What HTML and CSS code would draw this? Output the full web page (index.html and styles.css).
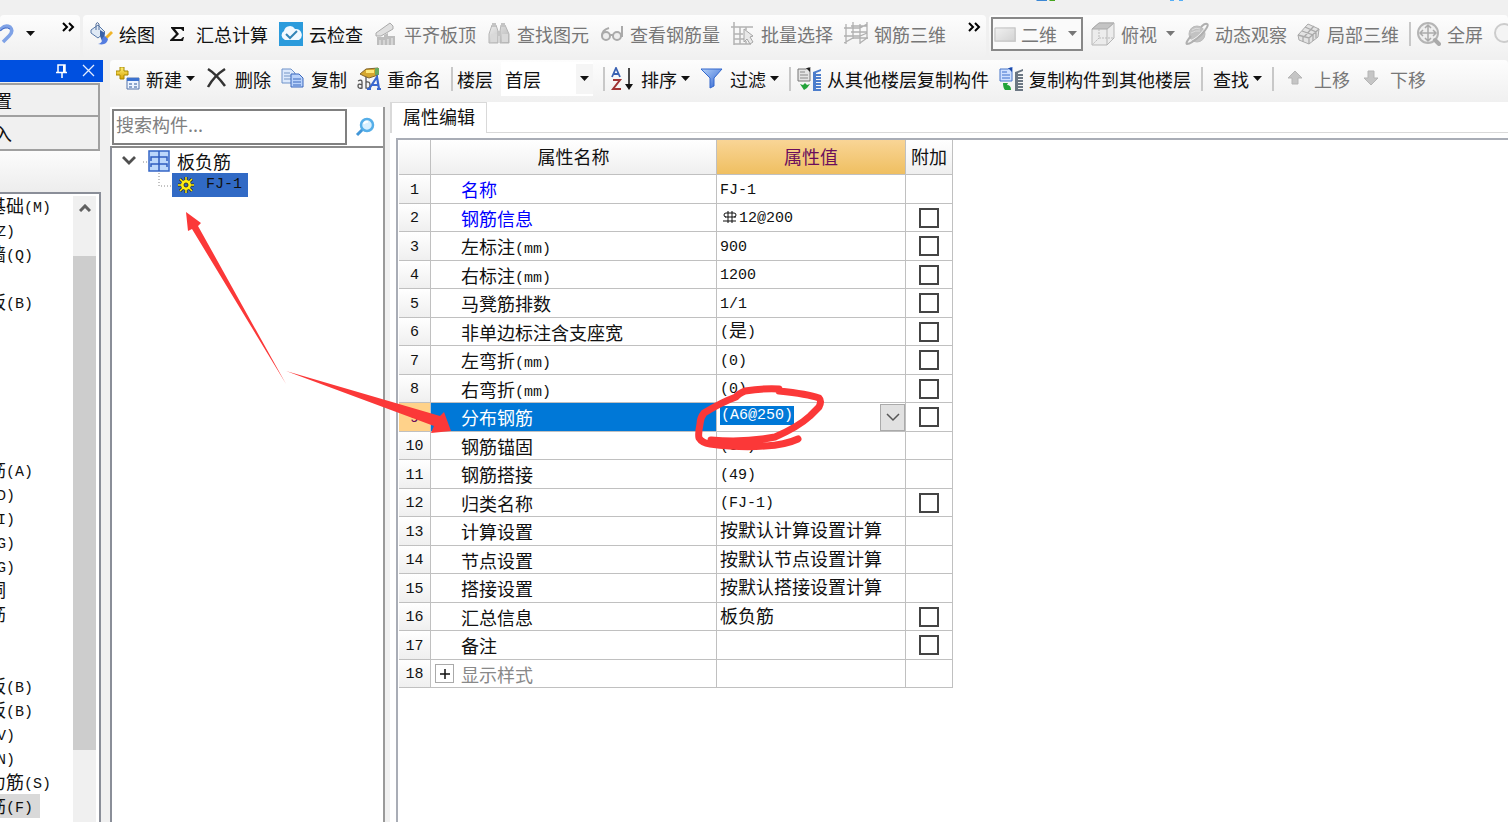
FILE: index.html
```html
<!DOCTYPE html>
<html lang="zh-CN">
<head>
<meta charset="utf-8">
<title>属性编辑</title>
<link rel="stylesheet" href="styles.css">
</head>
<body>
<svg class="defs" width="0" height="0" aria-hidden="true">
  <defs>
    <linearGradient id="blue" x1="0" y1="0" x2="1" y2="1"><stop offset="0" stop-color="#b5d3fa"/><stop offset="1" stop-color="#2c60cf"/></linearGradient>
    <linearGradient id="gold" x1="0" y1="0" x2="0" y2="1"><stop offset="0" stop-color="#fff27a"/><stop offset="1" stop-color="#d8a200"/></linearGradient>
    <linearGradient id="grey" x1="0" y1="0" x2="1" y2="1"><stop offset="0" stop-color="#eee"/><stop offset="1" stop-color="#b5b5b5"/></linearGradient>
    <symbol id="down" viewBox="0 0 9 6"><path d="M0 0h9L4.500 5z" fill="currentColor"/></symbol>
    <symbol id="more" viewBox="0 0 14 10"><path d="M1 1l4 4-4 4M7 1l4 4-4 4" fill="none" stroke="#000" stroke-width="2"/></symbol>
  </defs>
</svg>

<div class="strip">
  <svg class="strip-icons" viewBox="0 0 160 3" aria-hidden="true"><path d="M0 0h11v1H1z" fill="#3c87d4"/><path d="M13 0h6v1h-5z" fill="#46a51e"/><path d="M134 0h4v1h-4zM143 0h4v1h-4z" fill="#55aef5"/></svg>
</div>

<header class="bars">
  <div class="bar bar-undo">
    <button class="tool" aria-label="撤销"><svg class="undo" viewBox="0 0 14 24"><path d="M0 8Q5 2 10 5Q14 9 9 14L3 20" fill="none" stroke="#7fa2e6" stroke-width="3.500"/><path d="M0 9Q5 4 10 7" fill="none" stroke="#3c66c5"/></svg></button>
    <button class="tool" aria-label="撤销列表"><svg class="arrow"><use href="#down"/></svg></button>
    <button class="tool more" aria-label="更多"><svg class="chev"><use href="#more"/></svg></button>
  </div>
  <div class="bar bar-draw">
    <button class="tool"><svg class="icon" viewBox="0 0 24 24"><path d="M2 8L9 3l7 7-7 6-7-5z" fill="#dfe9f5" stroke="#5878a8"/><path d="M7 8V2q1-3 3 0v6" fill="none" stroke="#536f9b"/><path d="M11 8l5 3-1 7 2 2-4-1-2-5z" fill="#3a62a8"/><path d="M22 9l2 2-6 6-2-2z" fill="#f0b429"/><path d="M16 14l3 3q-1 7-10 5 4-1 4-4 0-3 3-4z" fill="#547de0"/></svg>绘图</button>
    <button class="tool"><svg class="icon" viewBox="0 0 24 24"><path d="M5 5h13v4h-1l-2-2H9l4 5-5 5h7l2-2h1l-1 4H4v-1l6-6-5-6z" fill="#111"/></svg>汇总计算</button>
    <button class="tool"><svg class="icon" viewBox="0 0 24 24"><path d="M0 0h24v24H0z" fill="#2b9bdc"/><path d="M6 18a5 5 0 0 1-1-9 6 6 0 0 1 11-2 6 6 0 0 1 4 11z" fill="#f1f9ff"/><path d="M7 12l4 4 7-7" fill="none" stroke="#3385b7" stroke-width="2"/></svg>云检查</button>
    <button class="tool off"><svg class="icon" viewBox="0 0 24 24"><path d="M2 11L16 1l3 3v3L7 14H2z" fill="#e0e0e0" stroke="#aaa"/><path d="M3 15h7v-2l4-2v3h7v9H3z" fill="#bdbdbd"/><path d="M6 18v5M10 18v5M14 17v6M18 16v7" stroke="#eee"/></svg>平齐板顶</button>
    <button class="tool off"><svg class="icon" viewBox="0 0 24 24"><path d="M5 3h4l2 6v12H2v-9zM14 3h4l4 9v9h-9V9z" fill="url(#grey)" stroke="#b5b5b5"/><path d="M5 1h4v4H5zM14 1h4v4h-4zM10 9h4v5h-4z" fill="#c4c4c4"/><path d="M4 12h6v8H4zM15 12h6v8h-6z" fill="#d9d9d9"/></svg>查找图元</button>
    <button class="tool off"><svg class="icon" viewBox="0 0 24 24"><path d="M9 6Q2 8 2 14M22 4v11" fill="none" stroke="#aaa" stroke-width="2"/><circle cx="6" cy="14" r="4" fill="#eee" stroke="#aaa" stroke-width="2"/><circle cx="17" cy="14" r="4" fill="#eee" stroke="#aaa" stroke-width="2"/><path d="M10 13h3" stroke="#aaa" stroke-width="2"/></svg>查看钢筋量</button>
    <button class="tool off"><svg class="icon" viewBox="0 0 24 24"><path d="M3 0v23M0 5h22M3 12h9M3 17h10M3 22h17M9 5v17M15 5v3M15 19v3" fill="none" stroke="#b3b3b3" stroke-width="1.500"/><path d="M13 7l9 7-3 1 3 5-3 2-3-5-3 3z" fill="#e8e8e8" stroke="#a5a5a5"/></svg>批量选择</button>
    <button class="tool off"><svg class="icon" viewBox="0 0 24 24"><path d="M2 2v20M9 0v17M16 2v20M23 0v17M0 6h16l7-4M7 4h16M0 14h16l7-3M7 10h16M0 21l9-5h15M16 21l7-5" fill="none" stroke="#b0b0b0" stroke-width="1.300"/></svg>钢筋三维</button>
    <button class="tool more" aria-label="更多"><svg class="chev"><use href="#more"/></svg></button>
  </div>
  <div class="bar bar-view">
    <label class="combo combo-view">
      <svg class="icon" viewBox="0 0 24 24"><path d="M1 5h22v15H1z" fill="url(#grey)" opacity=".6"/><path d="M2 6h20v13H2z" fill="none" stroke="#c4c4c4"/></svg>
      <select aria-label="视图"><option>二维</option></select>
      <svg class="arrow"><use href="#down"/></svg>
    </label>
    <button class="tool off"><svg class="icon" viewBox="0 0 24 24"><path d="M1 7l7-6h15v15l-7 7H1z" fill="#ececec" stroke="#b5b5b5"/><path d="M1 7l7-6h15l-7 6z" fill="#c4c4c4" stroke="#aaa"/><path d="M16 7v16M23 1l-7 6" stroke="#b5b5b5"/><path d="M8 7v9h14M8 16l-6 6" fill="none" stroke="#bbb" stroke-dasharray="2 1"/></svg>俯视<svg class="arrow"><use href="#down"/></svg></button>
    <button class="tool off"><svg class="icon" viewBox="0 0 24 24"><circle cx="12" cy="12" r="8" fill="#c2c2c2" stroke="#bbb"/><path d="M7 8q4-3 8-1M6 11q5-3 9-2" fill="none" stroke="#ddd"/><path d="M6 14Q0 21 2 22Q6 22 16 13Q25 3 22 2Q20 1 16 5" fill="none" stroke="#b0b0b0" stroke-width="2"/><path d="M4 19Q12 17 20 6" stroke="#eee" fill="none"/></svg>动态观察</button>
    <button class="tool off"><svg class="icon" viewBox="0 0 24 24"><path d="M1 13L11 2l11 5-1 8-9 7-10-4z" fill="#e3e3e3" stroke="#aaa"/><path d="M1 13l11 3 10-9M12 16v6M8 5l11 5v6M5 9l11 4v6M6 14v6M17 4l-10 11" fill="none" stroke="#aaa" stroke-width="1.300"/></svg>局部三维</button>
    <div class="lead"><span class="sep"></span>
    <button class="tool off"><svg class="icon" viewBox="0 0 24 24"><circle cx="11" cy="11" r="10" fill="#eee" stroke="#b5b5b5" stroke-width="2"/><path d="M18 18l4 4" stroke="#aaa" stroke-width="4" stroke-linecap="round"/><path d="M11 4v14M4 11h14M8 6l3-3 3 3M8 16l3 3 3-3M6 8l-3 3 3 3M16 8l3 3-3 3" fill="none" stroke="#aaa" stroke-width="1.500"/></svg>全屏</button></div>
    <button class="tool off" aria-label="缩放"><svg class="icon" viewBox="0 0 24 24"><circle cx="11" cy="11" r="9" fill="#f4f4f4" stroke="#ccc" stroke-width="2"/></svg></button>
  </div>
</header>

<div class="work">
  <aside class="side">
    <div class="side-title">
      <button class="title-btn" aria-label="固定"><svg viewBox="0 0 14 14"><path d="M3 8V1h7v7M1 8.500h11M7 9v5" fill="none" stroke="#fff" stroke-width="1.500"/><path d="M8 1h2v7H8z" fill="#fff"/></svg></button>
      <button class="title-btn" aria-label="关闭"><svg viewBox="0 0 14 14"><path d="M1 1l11 11M12 1L1 12" stroke="#e4edff" stroke-width="1.300"/></svg></button>
    </div>
    <button class="side-btn">置</button>
    <button class="side-btn">入</button>
    <div class="side-gap"></div>
    <div class="side-list">
      <ul class="kinds">
        <li>基础<span class="en">(M)</span></li><li><span class="en">(Z)</span></li><li>墙<span class="en">(Q)</span></li><li></li><li>板<span class="en">(B)</span></li>
        <li></li><li></li><li></li><li></li><li></li><li></li>
        <li>筋<span class="en">(A)</span></li><li><span class="en">(D)</span></li><li><span class="en">(I)</span></li><li><span class="en">(G)</span></li><li><span class="en">(G)</span></li><li>洞</li><li>筋</li>
        <li></li><li></li>
        <li>板<span class="en">(B)</span></li><li>板<span class="en">(B)</span></li><li><span class="en">(V)</span></li><li><span class="en">(N)</span></li><li>力筋<span class="en">(S)</span></li><li class="current">筋<span class="en">(F)</span></li>
      </ul>
      <div class="scroll"><svg class="up" viewBox="0 0 12 8"><path d="M1 7l5-5 5 5" fill="none" stroke="#606060" stroke-width="3"/></svg><div class="thumb"></div></div>
    </div>
  </aside>

  <main class="main">
    <div class="bar bar-edit">
      <button class="tool"><svg class="icon" viewBox="0 0 24 24"><path d="M4 0h4v4h4v4H8v4H4V8H0V4h4z" fill="url(#gold)" stroke="#a98700"/><path d="M11 11h12v11H11z" fill="#edf4ff" stroke="#5574aa"/><path d="M11 11h12v3H11z" fill="#3c72cf"/><path d="M13 17h3M18 17h3M13 20h3M18 20h3" stroke="#8da6cc" stroke-width="2"/></svg>新建<svg class="arrow"><use href="#down"/></svg></button>
      <button class="tool"><svg class="icon" viewBox="0 0 24 24"><path d="M3 2q8 5 17 17M20 2Q9 9 3 20" fill="none" stroke="#333" stroke-width="2.500"/></svg>删除</button>
      <button class="tool"><svg class="icon" viewBox="0 0 24 24"><path d="M1 2h9l4 4v10H1z" fill="#dce9fc" stroke="#6f92c9"/><path d="M3 6h6M3 9h8M3 12h8" stroke="#7595c5"/><path d="M10 7h8l4 4v9H10z" fill="#b9d2fb" stroke="#3866bd"/><path d="M12 12h8M12 15h8M12 18h8" stroke="#3b69bd"/></svg>复制</button>
      <button class="tool"><svg class="icon" viewBox="0 0 24 24"><path d="M3 7l6-5 12-1v7l-9 3-5-2z" fill="#d5a72e" stroke="#81642c"/><path d="M9 3h8v3H9z" fill="#ffe87a"/><path d="M18 1h4v7h-4z" fill="#68a960"/><path d="M1 14q4-2 4 1v6q-4 1-4-2t4-1M9 10v11q4 1 4-3t-4-3" fill="none" stroke="#555" stroke-width="1.300"/><path d="M12 22l8-12 2 12M15 18h7M10 22h4M20 22h4" fill="none" stroke="#3a68cf" stroke-width="2.200"/></svg>重命名</button>
      <div class="floor">
        <span class="sep"></span>
        <label for="floor">楼层</label>
        <div class="combo combo-floor"><select id="floor"><option>首层</option></select><span class="drop"><svg class="arrow"><use href="#down"/></svg></span></div>
      </div>
      <div class="lead"><span class="sep"></span>
      <button class="tool"><svg class="icon" viewBox="0 0 24 24"><path d="M1 10L5 1l4 9M3 7h5" fill="none" stroke="#3961b2" stroke-width="1.800"/><path d="M2 13h7L2 22h8" fill="none" stroke="#a03434" stroke-width="2"/><path d="M18 1v19" stroke="#111" stroke-width="1.500"/><path d="M14 17h8l-4 6z" fill="#111"/></svg>排序<svg class="arrow"><use href="#down"/></svg></button></div>
      <button class="tool"><svg class="icon" viewBox="0 0 24 24"><path d="M1 2h21l-8 9v8l-4 2V11z" fill="url(#blue)" stroke="#3267cc"/></svg>过滤<svg class="arrow"><use href="#down"/></svg></button>
      <div class="lead"><span class="sep"></span>
      <button class="tool"><svg class="icon" viewBox="0 0 24 24"><path d="M1 2h8l4-2v14H1z" fill="#e4e4e4" stroke="#777"/><path d="M9 1h4v4z" fill="#222"/><path d="M3 5h5M3 8h8M3 11h8" stroke="#888"/><path d="M3 17l3 1 2-2 2 2 3-1-3 4-3 2z" fill="#22a33a"/><path d="M16 5l8-3v2l-5 2v17h-3z" fill="#4c7dcc"/><path d="M16 8h8M16 11h8M16 14h8M16 17h8M16 20h8M16 23h8" stroke="#4c7dcc" stroke-width="1.800"/></svg>从其他楼层复制构件</button></div>
      <button class="tool"><svg class="icon" viewBox="0 0 24 24"><path d="M1 2h8l4-2v14H1z" fill="#cfe0ff" stroke="#4774c9"/><path d="M9 1h4v4z" fill="#1d48a8"/><path d="M3 5h5M3 8h8M3 11h8" stroke="#3c6fcb"/><path d="M4 16h5l-1 2q4 0 4 5H6q-2-2-2-7z" fill="#22a33a"/><path d="M16 5l8-3v2l-5 2v17h-3z" fill="#6c7783"/><path d="M16 8h8M16 11h8M16 14h8M16 17h8M16 20h8M16 23h8" stroke="#6c7783" stroke-width="1.800"/></svg>复制构件到其他楼层</button>
      <span class="sep"></span>
      <button class="tool">查找<svg class="arrow"><use href="#down"/></svg></button>
      <span class="sep"></span>
      <button class="tool off"><svg class="icon" viewBox="0 0 24 24"><path d="M11 4l7 7h-4v6H8v-6H4z" fill="#c5c5c5" stroke="#b5b5b5"/></svg>上移</button>
      <button class="tool off"><svg class="icon" viewBox="0 0 24 24"><path d="M11 18l7-7h-4V4H8v7H4z" fill="#c5c5c5" stroke="#b5b5b5"/></svg>下移</button>
    </div>

    <div class="panes">
      <section class="parts">
        <form class="search">
          <input type="text" placeholder="搜索构件..." aria-label="搜索构件">
          <button type="button" aria-label="搜索"><svg viewBox="0 0 20 20"><path d="M8 12l-6 6" stroke="#4196d8" stroke-width="3"/><circle cx="12" cy="8" r="6" fill="#d8f0ff" stroke="#55aee8" stroke-width="2.500"/><path d="M9 7q1-3 4-2" fill="none" stroke="#fff" stroke-width="2"/></svg></button>
        </form>
        <ul class="tree">
          <li class="node">
            <svg class="node-lines" viewBox="0 0 28 24"><path d="M1 8l6 6 6-6" fill="none" stroke="#505050" stroke-width="2.800"/><path d="M21 13h7" stroke="#888" stroke-dasharray="1 2"/></svg>
            <svg class="node-icon" viewBox="0 0 22 22"><path d="M1 1h20v20H1z" fill="#bcd7fb" stroke="#3466c6" stroke-width="1.500"/><path d="M11 1v20M3 11V7h16v4M3 17v-3h16v3" fill="none" stroke="#2f5dc0" stroke-width="1.500"/></svg>
            <span>板负筋</span>
          </li>
          <li class="leaf">
            <svg class="leaf-lines" viewBox="0 0 16 24"><path d="M1 0v13h15" fill="none" stroke="#888" stroke-dasharray="1 2"/></svg>
            <a class="picked" href="#fj1"><svg viewBox="0 0 16 16"><path d="M8 0v16M0 8h16M2 2l12 12M14 2L2 14" stroke="#222" stroke-width="3"/><circle cx="8" cy="8" r="5" fill="#ffee10"/><path d="M8 0v16M0 8h16M2 2l12 12M14 2L2 14" stroke="#ffee10" stroke-width="1.500"/><circle cx="8" cy="8" r="2" fill="#316ac5" stroke="#333"/></svg><span class="en">FJ-1</span></a>
          </li>
        </ul>
      </section>

      <section class="props">
        <div class="tabs"><button class="tab">属性编辑</button><span class="tabs-rest"></span></div>
        <div class="frame">
          <table class="grid">
            <colgroup><col class="c-no"><col class="c-name"><col class="c-val"><col class="c-add"></colgroup>
            <thead><tr><th></th><th>属性名称</th><th class="hot">属性值</th><th class="add">附加</th></tr></thead>
            <tbody>
              <tr><th><span class="en">1</span></th><td class="key">名称</td><td><span class="en">FJ-1</span></td><td></td></tr>
              <tr><th><span class="en">2</span></th><td class="key">钢筋信息</td><td><svg class="rebar" viewBox="0 0 18 16"><path d="M8 2v12M12 2v12M3 12h13M5 8h11" stroke="#111"/><path d="M14 4H6Q4 4 4 6t2 2M14 4q2 0 2 2t-2 2" fill="none" stroke="#111"/></svg><span class="en">12@200</span></td><td><input type="checkbox" aria-label="附加 钢筋信息"></td></tr>
              <tr><th><span class="en">3</span></th><td>左标注<span class="en">(mm)</span></td><td><span class="en">900</span></td><td><input type="checkbox" aria-label="附加 左标注"></td></tr>
              <tr><th><span class="en">4</span></th><td>右标注<span class="en">(mm)</span></td><td><span class="en">1200</span></td><td><input type="checkbox" aria-label="附加 右标注"></td></tr>
              <tr><th><span class="en">5</span></th><td>马凳筋排数</td><td><span class="en">1/1</span></td><td><input type="checkbox" aria-label="附加 马凳筋排数"></td></tr>
              <tr><th><span class="en">6</span></th><td>非单边标注含支座宽</td><td><span class="en">(</span>是<span class="en">)</span></td><td><input type="checkbox" aria-label="附加 非单边标注含支座宽"></td></tr>
              <tr><th><span class="en">7</span></th><td>左弯折<span class="en">(mm)</span></td><td><span class="en">(0)</span></td><td><input type="checkbox" aria-label="附加 左弯折"></td></tr>
              <tr><th><span class="en">8</span></th><td>右弯折<span class="en">(mm)</span></td><td><span class="en">(0)</span></td><td><input type="checkbox" aria-label="附加 右弯折"></td></tr>
              <tr class="active"><th><span class="en">9</span></th><td>分布钢筋</td><td><div class="editor"><input type="text" value="(A6@250)" aria-label="分布钢筋"><button aria-label="选择"><svg viewBox="0 0 14 10"><path d="M1 2l6 6 6-6" fill="none" stroke="#555" stroke-width="1.500"/></svg></button></div></td><td><input type="checkbox" aria-label="附加 分布钢筋"></td></tr>
              <tr><th><span class="en">10</span></th><td>钢筋锚固</td><td><span class="en">(35)</span></td><td></td></tr>
              <tr><th><span class="en">11</span></th><td>钢筋搭接</td><td><span class="en">(49)</span></td><td></td></tr>
              <tr><th><span class="en">12</span></th><td>归类名称</td><td><span class="en">(FJ-1)</span></td><td><input type="checkbox" aria-label="附加 归类名称"></td></tr>
              <tr><th><span class="en">13</span></th><td>计算设置</td><td>按默认计算设置计算</td><td></td></tr>
              <tr><th><span class="en">14</span></th><td>节点设置</td><td>按默认节点设置计算</td><td></td></tr>
              <tr><th><span class="en">15</span></th><td>搭接设置</td><td>按默认搭接设置计算</td><td></td></tr>
              <tr><th><span class="en">16</span></th><td>汇总信息</td><td>板负筋</td><td><input type="checkbox" aria-label="附加 汇总信息"></td></tr>
              <tr><th><span class="en">17</span></th><td>备注</td><td></td><td><input type="checkbox" aria-label="附加 备注"></td></tr>
              <tr class="folded"><th><span class="en">18</span></th><td><div class="fold"><button class="plus" aria-label="展开"><svg viewBox="0 0 12 12"><path d="M6 1v10M1 6h10" stroke="#111" stroke-width="1.500"/></svg></button>显示样式</div></td><td></td><td></td></tr>
            </tbody>
          </table>
        </div>
      </section>
    </div>
  </main>
</div>

<svg class="marks" viewBox="0 0 1508 822" aria-hidden="true">
  <path d="M186 212L201 223L198 226L286 384L192 229L188 231Z" fill="#fb3838"/>
  <path d="M286 371L440 416L444 412L451 431L431 433L434 426Z" fill="#fb3838"/>
  <path d="M779 389Q765 388 745 391Q738 394 736 397Q722 402 704 413Q700 418 700 424Q698 434 699 438Q702 443 710 444Q740 448 765 446Q785 445 798 439M711 440Q745 443 775 437Q798 427 810 416L819 407Q822 401 819 398Q808 394 779 391" fill="none" stroke="#fb3838" stroke-width="7" stroke-linecap="round" stroke-linejoin="round"/>
</svg>
</body>
</html>
```
FILE: styles.css
```css
* { box-sizing: border-box; }

body {
  margin: 0;
  height: 100vh;
  display: flex;
  flex-direction: column;
  overflow: hidden;
  background: #f0f0f0;
  color: #111;
  font: 18px/24px "Noto Sans CJK SC", sans-serif;
}

button, input, select { font: inherit; color: inherit; }
button { border: 0; background: none; padding: 0; }
ul { list-style: none; margin: 0; padding: 0; }
svg { flex: none; display: block; }
.defs { position: absolute; }

/* Half-width text sits next to the ideographs at half their advance */
.en { font: 15px/16px "Liberation Mono", monospace; vertical-align: 1px; }

.strip { height: 15px; flex: none; padding-left: 1036px; }
.strip-icons { width: 160px; height: 3px; }

/* Toolbars */
.bars { display: flex; gap: 3px; flex: none; margin-bottom: 2px; }
.bar {
  display: flex;
  align-items: center;
  background: linear-gradient(#fdfdfd, #f0f0f0);
  border-radius: 4px;
  white-space: nowrap;
}
.bars .bar { height: 43px; padding-bottom: 6px; }
.bar-undo { width: 80px; gap: 12px; }
.bar-draw { width: 903px; padding-left: 6px; gap: 11px; }
.bars .bar-view { flex: 1; padding-left: 2px; gap: 10px; overflow: hidden; }
.undo { width: 14px; height: 24px; }
.tool { display: flex; align-items: center; gap: 6px; flex: none; }
.off { color: #777; }
.icon { width: 24px; height: 24px; }
.arrow { width: 9px; height: 6px; }
.bar-view .tool .arrow { margin-left: 3px; }
.chev { width: 14px; height: 10px; }
.more { margin-left: auto; margin-right: 4px; padding-bottom: 14px; }
.sep { width: 2px; height: 24px; background: #c8c8c8; flex: none; }
.lead { display: flex; align-items: center; gap: 6px; flex: none; }

.combo { display: flex; align-items: center; flex: none; }
.combo select { appearance: none; border: 0; background: none; padding: 0; outline: 0; }
.combo-view {
  width: 92px;
  height: 34px;
  margin-right: -2px;
  gap: 4px;
  border: 2px solid #888;
  color: #777;
  background: #fafafa;
}
.combo-view select { flex: 1; min-width: 0; }
.combo-view .arrow { margin-right: 4px; }

.bar-edit { height: 42px; padding: 0 6px 5px; gap: 10px; flex: none; }
.bar-edit .arrow { margin-left: -2px; }
.floor { display: flex; align-items: center; gap: 4px; }
.combo-floor { width: 92px; height: 34px; background: #fff; margin-left: 4px; padding-left: 4px; }
.combo-floor select { flex: 1; min-width: 0; }
.drop { display: flex; align-items: center; justify-content: center; width: 17px; height: 30px; background: #f5f5f5; }
.bar-edit .drop .arrow { margin: 0; }

.work { flex: 1; min-height: 0; display: flex; gap: 7px; }

/* Left navigation */
.side { width: 103px; flex: none; display: flex; flex-direction: column; overflow: hidden; }
.side-title {
  height: 22px;
  flex: none;
  display: flex;
  align-items: center;
  justify-content: flex-end;
  gap: 13px;
  padding-right: 7px;
  background: #0050e0;
}
.title-btn svg { width: 14px; height: 14px; }
.side-btn {
  height: 34px;
  flex: none;
  margin: 0 3px 0 0;
  border: solid #a0a0a0;
  border-width: 0 2px 2px 0;
  text-align: left;
  text-indent: -6px;
}
.side-title + .side-btn { border-top: 2px solid #a0a0a0; margin-top: 1px; }
.side-gap { height: 41px; flex: none; margin-right: 3px; background: linear-gradient(#fcfcfc, #ededed); }
.side-list {
  flex: 1;
  min-height: 0;
  display: flex;
  margin-right: 2px;
  background: #fff;
  border-top: 2px solid #8a8e98;
  border-right: 2px solid #8a8e98;
  overflow: hidden;
}
.kinds { flex: 1; margin-left: -12px; white-space: nowrap; line-height: 22px; }
.kinds li { height: 24px; width: max-content; }
.current { background: #d9d9d9; padding-right: 7px; }
.scroll { width: 23px; margin: 2px 3px 0 0; background: #f0f0f0; display: flex; flex-direction: column; align-items: center; padding: 8px 0 72px; gap: 44px; }
.up { width: 12px; height: 8px; }
.thumb { width: 100%; flex: 1; background: #cdcdcd; }

/* Work area */
.main { flex: 1; min-width: 0; display: flex; flex-direction: column; }
.panes { flex: 1; min-height: 0; display: flex; gap: 5px; }
.parts {
  width: 275px;
  flex: none;
  display: flex;
  flex-direction: column;
  margin-top: 5px;
  background: #fff;
  border-right: 2px solid #999;
}
.search { display: flex; align-items: center; padding: 2px 0 1px 2px; margin: 0; }
.search input {
  flex: 1;
  min-width: 0;
  height: 36px;
  padding: 0 2px 6px;
  border: 2px solid #808080;
  background: #fff;
  outline: 0;
}
.search input::placeholder { color: #808080; opacity: 1; }
.search button { width: 36px; display: flex; justify-content: center; }
.search button svg { width: 20px; height: 20px; }
.tree { flex: 1; border-top: 2px solid #8a8a8a; border-left: 2px solid #8a8e98; padding: 1px 0 0 10px; }
.node, .leaf { display: flex; align-items: center; height: 24px; }
.node { line-height: 22px; }
.node-lines { width: 28px; height: 24px; margin-right: -2px; }
.node-icon { width: 22px; height: 22px; margin-right: 7px; }
.leaf { padding-left: 36px; }
.leaf-lines { width: 16px; height: 24px; margin-right: -2px; }
.picked {
  display: flex;
  align-items: center;
  gap: 12px;
  height: 24px;
  padding: 0 6px;
  background: #316ac5;
  color: #111;
  text-decoration: none;
}
.picked svg { width: 16px; height: 16px; }

.props { flex: 1; min-width: 0; display: flex; flex-direction: column; background: #fff; }
.tabs { display: flex; height: 31px; flex: none; }
.tab { width: 97px; padding-bottom: 4px; border: solid #d9d9d9; border-width: 1px 1px 0 2px; }
.tabs-rest { flex: 1; border-bottom: 1px solid #d9d9d9; }
.frame { flex: 1; margin: 5px 0 0 6px; padding-left: 1px; border: solid #a9adb6; border-width: 2px 0 0 2px; }

.grid { width: 554px; table-layout: fixed; border-collapse: separate; border-spacing: 0; }
.c-no { width: 32px; }
.c-name { width: 286px; }
.c-val { width: 189px; }
.c-add { width: 47px; }
.grid th, .grid td {
  padding: 0;
  border: solid #c0c0c0;
  border-width: 0 1px 1px 0;
  font-weight: 400;
  text-align: left;
  white-space: nowrap;
}
.grid th { text-align: center; background: linear-gradient(#fff, #efefef); }
.grid thead th { height: 35px; padding-bottom: 2px; }
.grid thead .hot { background: linear-gradient(#f9d596, #efbf61); color: #6b0d5c; }
.grid tbody tr { height: 29px; }
.grid tbody tr:nth-child(even) { height: 28px; }
.grid td:nth-child(2) { padding-left: 30px; }
.grid tbody th, .grid td:nth-child(3) { line-height: 22px; padding-bottom: 4px; }
.grid td:nth-child(3) { padding-left: 3px; }
.grid td:nth-child(4) { text-align: center; }
.grid .key { color: #00f; }
.grid .active th { background: #ffd28a; color: #6b0d5c; }
.grid .active td:nth-child(2) { background: #0078d7; color: #fff; }
.grid .active td:nth-child(3) { padding-bottom: 0; }
.folded td { color: #888; }

.grid input[type="checkbox"] {
  appearance: none;
  display: block;
  width: 20px;
  height: 20px;
  margin: 0 auto;
  border: 2px solid #444;
  background: #fff;
}
.rebar { display: inline-block; width: 18px; height: 16px; margin-right: 1px; vertical-align: -2px; }

.editor { display: flex; justify-content: space-between; }
.editor input {
  width: 74px;
  height: 19px;
  margin-top: 2px;
  padding: 0 1px;
  border: 0;
  outline: 0;
  background: #0078d7;
  color: #fff;
  font: 15px/19px "Liberation Mono", monospace;
}
.editor button {
  display: flex;
  align-items: center;
  justify-content: center;
  width: 25px;
  height: 27px;
  border: 1px solid #aaa;
  background: #e1e1e1;
}
.editor svg { width: 14px; height: 10px; }

.fold { display: flex; align-items: center; gap: 7px; margin-left: -26px; }
.plus {
  display: flex;
  align-items: center;
  justify-content: center;
  width: 19px;
  height: 19px;
  border: 1px solid #aaa;
}
.plus svg { width: 12px; height: 12px; }

/* Freehand annotation over the page */
.marks { position: absolute; top: 0; left: 0; width: 1508px; height: 822px; pointer-events: none; }
```
